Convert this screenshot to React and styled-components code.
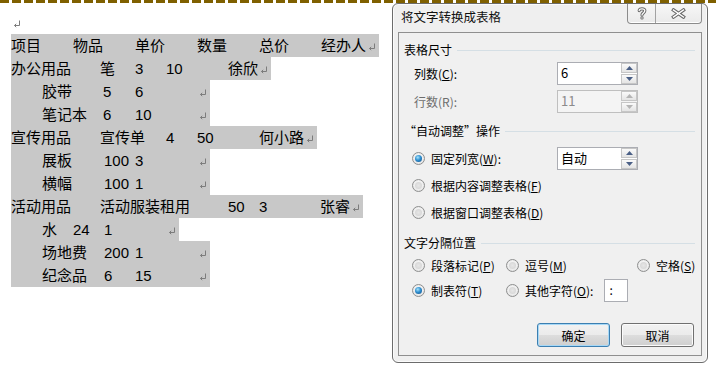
import React from 'react';
import styled, { createGlobalStyle } from 'styled-components';

const GlobalStyle = createGlobalStyle`
  html, body {
    margin: 0;
    padding: 0;
    background: #ffffff;
  }
  body {
    width: 716px;
    height: 368px;
    overflow: hidden;
    font-family: "Liberation Sans", "Noto Sans CJK SC", sans-serif;
  }
`;

// each cell: [text, width up to the next tab stop]; no width = natural width
const rows = [
  [['项目', 62], ['物品', 62], ['单价', 62], ['数量', 62], ['总价', 62], ['经办人']],
  [['办公用品', 89], ['笔', 35], ['3', 31], ['10', 62], ['徐欣']],
  [['', 31], ['胶带', 61], ['5', 32], ['6', 62]],
  [['', 31], ['笔记本', 61], ['6', 32], ['10', 62]],
  [['宣传用品', 89], ['宣传单', 66], ['4', 31], ['50', 62], ['何小路']],
  [['', 31], ['展板', 62], ['100', 31], ['3', 62]],
  [['', 31], ['横幅', 62], ['100', 31], ['1', 62]],
  [['活动用品', 89], ['活动服装租用', 128], ['50', 31], ['3', 61], ['张睿']],
  [['', 31], ['水', 31], ['24', 31], ['1', 62]],
  [['', 31], ['场地费', 62], ['200', 31], ['1', 62]],
  [['', 31], ['纪念品', 62], ['6', 31], ['15', 62]],
];

const ParaMark = () => (
  <MarkBox>
    <svg width="8" height="8" viewBox="0 0 8 8">
      <path d="M6.5 0.5V5.5H1.5M3.2 3.8L1.5 5.5L3.2 7.2" fill="none" stroke="#7c7c7c" strokeWidth="1" />
    </svg>
  </MarkBox>
);

const Radio = ({ checked }) => <RadioCircle $checked={checked} />;

const SpinBox = ({ value, disabled }) => (
  <Spin $disabled={disabled}>
    <SpinValue $disabled={disabled}>{value}</SpinValue>
    <SpinButtons>
      <SpinButton>
        <svg width="7" height="4" viewBox="0 0 7 4">
          <path d="M0 4L3.5 0L7 4Z" fill={disabled ? '#b4b4b4' : '#4a5f86'} />
        </svg>
      </SpinButton>
      <SpinButton>
        <svg width="7" height="4" viewBox="0 0 7 4">
          <path d="M0 0L3.5 4L7 0Z" fill={disabled ? '#b4b4b4' : '#4a5f86'} />
        </svg>
      </SpinButton>
    </SpinButtons>
  </Spin>
);

const App = () => {
  return (
    <>
      <GlobalStyle />
      <Page>
        <TopRule />
        <Content>
          <Document>
            <EmptyLine>
              <ParaMark />
            </EmptyLine>
            {rows.map((cells, i) => (
              <TextRow key={i}>
                {cells.map(([text, w], j) => (
                  <Cell key={j} $w={w}>
                    {text}
                  </Cell>
                ))}
                <ParaMark />
              </TextRow>
            ))}
          </Document>

          <Dialog>
            <TitleBar>
              <Title>将文字转换成表格</Title>
              <CaptionButtons>
                <CaptionButton $w={28}>
                  <svg width="10" height="13" viewBox="0 0 10 13">
                    <g fill="none" strokeLinecap="round">
                      <path d="M2.2 3.6C2.2 1.2 7.8 1.2 7.8 3.8C7.8 5.9 5 5.9 5 8" stroke="#6a6a6a" strokeWidth="3.2" />
                      <path d="M2.2 3.6C2.2 1.2 7.8 1.2 7.8 3.8C7.8 5.9 5 5.9 5 8" stroke="#ffffff" strokeWidth="1.3" />
                      <path d="M5 10.8V11" stroke="#6a6a6a" strokeWidth="3.2" />
                      <path d="M5 10.8V11" stroke="#ffffff" strokeWidth="1.3" />
                    </g>
                  </svg>
                </CaptionButton>
                <CaptionButton $w={46} $last>
                  <svg width="15" height="11" viewBox="0 0 15 11">
                    <g fill="none" strokeLinecap="square">
                      <path d="M2.5 2L12.5 9M12.5 2L2.5 9" stroke="#6a6a6a" strokeWidth="3.4" />
                      <path d="M2.5 2L12.5 9M12.5 2L2.5 9" stroke="#ffffff" strokeWidth="1.4" />
                    </g>
                  </svg>
                </CaptionButton>
              </CaptionButtons>
            </TitleBar>

            <Panel>
              <GroupHeader>
                <span>表格尺寸</span>
                <HeaderLine />
              </GroupHeader>
              <FieldRow $top={4}>
                <span>
                  列数(<u>C</u>):
                </span>
                <SpinBox value="6" />
              </FieldRow>
              <FieldRow $top={5}>
                <DisabledLabel>行数(R):</DisabledLabel>
                <SpinBox value="11" disabled />
              </FieldRow>

              <GroupHeader $top={10}>
                <span>“自动调整”操作</span>
                <HeaderLine />
              </GroupHeader>
              <AutoFitList>
                <RadioRow>
                  <Option>
                    <Radio checked />
                    <span>
                      固定列宽(<u>W</u>):
                    </span>
                  </Option>
                  <SpinBox value="自动" />
                </RadioRow>
                <RadioRow>
                  <Option>
                    <Radio />
                    <span>
                      根据内容调整表格(<u>F</u>)
                    </span>
                  </Option>
                </RadioRow>
                <RadioRow>
                  <Option>
                    <Radio />
                    <span>
                      根据窗口调整表格(<u>D</u>)
                    </span>
                  </Option>
                </RadioRow>
              </AutoFitList>

              <GroupHeader $top={9}>
                <span>文字分隔位置</span>
                <HeaderLine />
              </GroupHeader>
              <SeparatorGrid>
                <Option>
                  <Radio />
                  <span>
                    段落标记(<u>P</u>)
                  </span>
                </Option>
                <Option>
                  <Radio />
                  <span>
                    逗号(<u>M</u>)
                  </span>
                </Option>
                <Option>
                  <Radio />
                  <span>
                    空格(<u>S</u>)
                  </span>
                </Option>
                <Option>
                  <Radio checked />
                  <span>
                    制表符(<u>T</u>)
                  </span>
                </Option>
                <Option>
                  <Radio />
                  <span>
                    其他字符(<u>O</u>):
                  </span>
                  <CharInput>:</CharInput>
                </Option>
              </SeparatorGrid>

              <ButtonBar>
                <PushButton $default>确定</PushButton>
                <PushButton>取消</PushButton>
              </ButtonBar>
            </Panel>
          </Dialog>
        </Content>
      </Page>
    </>
  );
};

export default App;

const Page = styled.div`
  width: 716px;
  height: 368px;
  display: flex;
  flex-direction: column;
  background: #ffffff;
`;

const TopRule = styled.div`
  height: 3px;
  flex: none;
  background: repeating-linear-gradient(to right, #7f6000 0 9px, transparent 9px 12px);
`;

const Content = styled.div`
  flex: 1;
  display: flex;
  align-items: flex-start;
`;

const Document = styled.div`
  flex: 1;
  display: flex;
  flex-direction: column;
  align-items: flex-start;
  padding: 8px 0 0 11px;
`;

const EmptyLine = styled.div`
  height: 23px;
  display: flex;
  align-items: center;
`;

const TextRow = styled.div`
  height: 23px;
  display: flex;
  align-items: center;
  background: #c8c8c8;
  font-size: 15px;
  line-height: 23px;
  color: #000000;
`;

const Cell = styled.span`
  flex: none;
  white-space: nowrap;
  width: ${({ $w }) => ($w ? `${$w}px` : 'auto')};
`;

const MarkBox = styled.span`
  width: 13px;
  height: 23px;
  flex: none;
  display: flex;
  align-items: center;
  padding: 3px 0 0 2px;
  box-sizing: border-box;
`;

const Dialog = styled.div`
  width: 316px;
  height: 360px;
  flex: none;
  box-sizing: border-box;
  margin-right: 8px;
  padding: 0 5px 6px 5px;
  display: flex;
  flex-direction: column;
  border: 1px solid #6c6c6c;
  border-radius: 6px;
  background: #efefef;
  box-shadow: inset 0 0 0 1px #fbfbfb;
  font-family: "Noto Sans CJK SC", sans-serif;
  font-size: 12px;
  color: #000000;
`;

const TitleBar = styled.div`
  height: 28px;
  flex: none;
  display: flex;
  align-items: flex-start;
`;

const Title = styled.div`
  margin: 5px 0 0 3px;
  line-height: 16px;
  font-size: 12.5px;
  color: #111111;
`;

const CaptionButtons = styled.div`
  margin-left: auto;
  display: flex;
  height: 19px;
  border: 1px solid #8c8c8c;
  border-top: none;
  border-radius: 0 0 4px 4px;
  background: linear-gradient(#f7f7f7, #eaeaea);
  box-shadow: inset 0 -1px 0 #ffffff;
  overflow: hidden;
`;

const CaptionButton = styled.div`
  width: ${({ $w }) => $w - 1}px;
  display: flex;
  align-items: center;
  justify-content: center;
  border-right: ${({ $last }) => ($last ? 'none' : '1px solid #a2a2a2')};
`;

const Panel = styled.div`
  flex: 1;
  display: flex;
  flex-direction: column;
  border: 1px solid #8f8f8f;
  background: #f0f0f0;
  padding: 9px 6px 0 5px;
`;

const GroupHeader = styled.div`
  height: 16px;
  display: flex;
  align-items: center;
  gap: 5px;
  margin-top: ${({ $top }) => $top || 0}px;
  line-height: 16px;
  white-space: nowrap;
`;

const HeaderLine = styled.div`
  flex: 1;
  height: 1px;
  background: #d5dfe5;
`;

const FieldRow = styled.div`
  height: 23px;
  display: grid;
  grid-template-columns: 143px 81px;
  align-items: center;
  padding-left: 10px;
  margin-top: ${({ $top }) => $top || 0}px;
`;

const DisabledLabel = styled.span`
  color: #6d6d6d;
`;

const Spin = styled.div`
  width: 81px;
  height: 23px;
  box-sizing: border-box;
  display: flex;
  border: 1px solid ${({ $disabled }) => ($disabled ? '#bfbfbf' : '#abadb3')};
  background: ${({ $disabled }) => ($disabled ? '#f4f4f4' : '#ffffff')};
`;

const SpinValue = styled.div`
  flex: 1;
  padding-left: 3px;
  line-height: 20px;
  font-size: 13px;
  color: ${({ $disabled }) => ($disabled ? '#8b8b8b' : '#000000')};
`;

const SpinButtons = styled.div`
  width: 16px;
  display: flex;
  flex-direction: column;
  gap: 1px;
  padding: 0 0 0 0;
`;

const SpinButton = styled.div`
  flex: 1;
  display: flex;
  align-items: center;
  justify-content: center;
  border: 1px solid #c6c6c6;
  background: linear-gradient(#fafafa, #e4e4e4);
`;

const AutoFitList = styled.div`
  margin-top: 6px;
  display: flex;
  flex-direction: column;
`;

const RadioRow = styled.div`
  height: 27px;
  display: grid;
  grid-template-columns: 145px 81px;
  align-items: center;
  padding-left: 8px;
`;

const Option = styled.div`
  display: flex;
  align-items: center;
  gap: 6px;
  white-space: nowrap;
`;

const RadioCircle = styled.span`
  width: 13px;
  height: 13px;
  flex: none;
  box-sizing: border-box;
  border-radius: 50%;
  border: 1px solid #8e8f8f;
  background: radial-gradient(circle at 50% 45%, #ffffff 0%, #f2f2f2 45%, #d6d6d6 100%);
  display: flex;
  align-items: center;
  justify-content: center;

  &::after {
    content: '';
    width: 7px;
    height: 7px;
    border-radius: 50%;
    background: ${({ $checked }) =>
      $checked
        ? 'radial-gradient(circle at 40% 35%, #a6e4fc 0%, #2f8fd0 45%, #0e4a82 100%)'
        : 'radial-gradient(circle, #e6e6e6 0%, #d2d2d2 100%)'};
  }
`;

const SeparatorGrid = styled.div`
  margin-top: 2px;
  display: grid;
  grid-template-columns: 94px 131px auto;
  grid-auto-rows: 25px;
  align-items: center;
  padding-left: 8px;
`;

const CharInput = styled.span`
  width: 24px;
  height: 23px;
  box-sizing: border-box;
  margin-left: 5px;
  border: 1px solid #abadb3;
  background: #ffffff;
  padding-left: 4px;
  line-height: 20px;
`;

const ButtonBar = styled.div`
  margin-top: 20px;
  display: flex;
  justify-content: flex-end;
  gap: 11px;
  padding-right: 1px;
`;

const PushButton = styled.button`
  width: 73px;
  height: 24px;
  padding: 0;
  border-radius: 3px;
  border: 1px solid ${({ $default }) => ($default ? '#3c7fb1' : '#707070')};
  box-shadow: inset 0 0 0 1px ${({ $default }) => ($default ? '#a7d8f6' : '#fbfbfb')};
  background: linear-gradient(#f2f2f2 0%, #ebebeb 50%, #dddddd 51%, #cfcfcf 100%);
  font-family: "Noto Sans CJK SC", sans-serif;
  font-size: 12px;
  color: #000000;
`;
